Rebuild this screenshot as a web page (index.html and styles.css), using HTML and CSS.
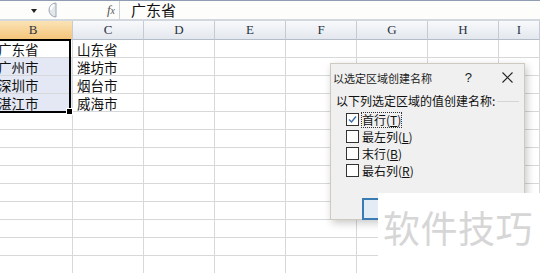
FILE: index.html
```html
<!DOCTYPE html>
<html lang="zh-CN">
<head>
    <meta charset="UTF-8">
    <title>以选定区域创建名称</title>
    <link rel="stylesheet" href="styles.css">
</head>
<body>

<div class="formula-bar">
    <div class="name-box"><span class="arrow"></span></div>
    <div class="tools">
        <svg class="knob" width="14" height="16" viewBox="0 0 14 16">
            <path d="M13 1 A7 7 0 0 0 13 15 Z" fill="#e3e7ec" stroke="#9aa6b4"/>
            <path d="M11 3 A5 5 0 0 0 8 8" fill="none" stroke="#fff" stroke-width="2"/>
        </svg>
        <span class="fx">f<span>x</span></span>
    </div>
    <div class="formula">广东省</div>
</div>

<div class="sheet">
    <div class="row head">
        <div class="sel">B</div><div>C</div><div>D</div><div>E</div><div>F</div><div>G</div><div>H</div><div>I</div>
    </div>
    <div class="row"><div>广东省</div><div>山东省</div><div></div><div></div><div></div><div></div><div></div><div></div></div>
    <div class="row"><div class="picked">广州市</div><div>潍坊市</div><div></div><div></div><div></div><div></div><div></div><div></div></div>
    <div class="row"><div class="picked">深圳市</div><div>烟台市</div><div></div><div></div><div></div><div></div><div></div><div></div></div>
    <div class="row"><div class="picked">湛江市</div><div>威海市</div><div></div><div></div><div></div><div></div><div></div><div></div></div>
    <div class="row"><div></div><div></div><div></div><div></div><div></div><div></div><div></div><div></div></div>
    <div class="row"><div></div><div></div><div></div><div></div><div></div><div></div><div></div><div></div></div>
    <div class="row"><div></div><div></div><div></div><div></div><div></div><div></div><div></div><div></div></div>
    <div class="row"><div></div><div></div><div></div><div></div><div></div><div></div><div></div><div></div></div>
    <div class="row"><div></div><div></div><div></div><div></div><div></div><div></div><div></div><div></div></div>
    <div class="row"><div></div><div></div><div></div><div></div><div></div><div></div><div></div><div></div></div>
    <div class="row"><div></div><div></div><div></div><div></div><div></div><div></div><div></div><div></div></div>
    <div class="row"><div></div><div></div><div></div><div></div><div></div><div></div><div></div><div></div></div>
    <div class="row"><div></div><div></div><div></div><div></div><div></div><div></div><div></div><div></div></div>

    <div class="selection"></div>
</div>

<div class="dialog">
    <div class="title-bar">
        <span class="title">以选定区域创建名称</span>
        <span class="help">?</span>
        <svg class="close" width="11" height="11" viewBox="0 0 11 11">
            <path d="M0.5 0.5 L10.5 10.5 M10.5 0.5 L0.5 10.5" stroke="#222" stroke-width="1.1"/>
        </svg>
    </div>
    <div class="dialog-body">
        <div class="group-label"><span>以下列选定区域的值创建名称:</span><span class="line"></span></div>
        <div class="options">
            <label class="option">
                <span class="box">
                    <svg width="11" height="11" viewBox="0 0 11 11"><path d="M2 5.5 L4.5 8 L9 2.5" fill="none" stroke="#3a6ea5" stroke-width="1.4"/></svg>
                </span>
                <span class="focus">首行(<u>T</u>)</span>
            </label>
            <label class="option"><span class="box"></span><span>最左列(<u>L</u>)</span></label>
            <label class="option"><span class="box"></span><span>末行(<u>B</u>)</span></label>
            <label class="option"><span class="box"></span><span>最右列(<u>R</u>)</span></label>
        </div>
        <div class="button"></div>
    </div>
</div>

<div class="watermark">软件技巧</div>

</body>
</html>
```

FILE: styles.css
```css
body {
    margin: 0;
    width: 540px;
    height: 273px;
    overflow: hidden;
    position: relative;
    background-color: #fff;
    font-family: "Noto Sans CJK SC", sans-serif;
    color: #111;
}

/* formula bar */
.formula-bar {
    display: flex;
    align-items: center;
    height: 18px;
    border-top: 1px solid #8e9db1;
    border-bottom: 2px solid #d3d8de;
    background-color: #fdfdfc;
}
.name-box {
    width: 43px;
    height: 100%;
    position: relative;
}
.arrow {
    position: absolute;
    left: 31px;
    top: 8px;
    border-left: 3px solid transparent;
    border-right: 3px solid transparent;
    border-top: 4px solid #222;
}
.tools {
    display: flex;
    align-items: center;
    width: 76px;
    height: 100%;
    border-right: 1px solid #cdd3da;
}
.knob {
    display: block;
}
.fx {
    margin-left: auto;
    margin-right: 4px;
    font-family: "Liberation Serif", serif;
    font-style: italic;
    font-size: 13px;
    color: #555;
}
.fx span {
    font-size: 10px;
}
.formula {
    padding-left: 11px;
    font-size: 15px;
    line-height: 18px;
    color: #111;
}

/* sheet */
.sheet {
    position: relative;
    margin-left: -6px;
}
.row {
    display: grid;
    grid-template-columns: 79px repeat(6, 71px) 1fr;
    height: 18px;
}
.row > div {
    border-right: 1px solid #d6d8da;
    border-bottom: 1px solid #d6d8da;
    padding: 1px 0 0 4px;
    font-size: 13.5px;
    line-height: 16px;
    white-space: nowrap;
    overflow: hidden;
}
.row.head {
    height: 19px;
    background: linear-gradient(#f8f9fb, #e2e7ee);
}
.row.head > div {
    padding: 0;
    text-align: center;
    font-family: "Liberation Serif", serif;
    font-size: 13px;
    line-height: 18px;
    color: #2a3340;
    border-right-color: #c4cbd4;
    border-bottom-color: #b3bcc7;
}
.row.head > .sel {
    background: linear-gradient(#fbe3b6, #f4c57a);
}
.row > .picked {
    background-color: #e3e8f4;
}
.selection {
    position: absolute;
    left: 0;
    top: 18px;
    width: 77px;
    height: 74px;
    border: 2px solid #000;
    box-sizing: border-box;
}
.selection::after {
    content: "";
    position: absolute;
    right: -4px;
    bottom: -4px;
    width: 5px;
    height: 5px;
    background-color: #000;
    border: 1px solid #fff;
}

/* dialog */
.dialog {
    position: absolute;
    left: 330px;
    top: 63px;
    width: 195px;
    height: 157px;
    box-sizing: border-box;
    background-color: #f0f0f0;
    border: 1px solid #cfcac0;
    box-shadow: 2px 3px 8px rgba(0,0,0,0.22);
}
.title-bar {
    display: flex;
    align-items: center;
    height: 27px;
    padding: 0 11px 0 2px;
}
.title {
    font-size: 11px;
    color: #222;
}
.help {
    margin-left: auto;
    margin-right: 30px;
    font-family: "Liberation Sans", sans-serif;
    font-size: 13px;
    color: #222;
}
.dialog-body {
    padding: 2px 5px 0 5px;
}
.group-label {
    display: flex;
    align-items: center;
    font-size: 12px;
    line-height: 16px;
    color: #111;
}
.group-label .line {
    flex: 1;
    margin-left: 2px;
    border-top: 1px solid #d4d4d4;
}
.options {
    display: flex;
    flex-direction: column;
    padding: 2px 0 0 10px;
}
.option {
    display: flex;
    align-items: center;
    height: 17px;
    font-size: 12px;
}
.box {
    width: 11px;
    height: 11px;
    border: 1px solid #333;
    background-color: #fff;
    margin-right: 3px;
    flex-shrink: 0;
}
.box svg {
    display: block;
}
.focus {
    outline: 1px dotted #333;
    line-height: 14px;
}
.button {
    margin: 19px 0 0 26px;
    width: 80px;
    height: 18px;
    border: 2px solid #3b7bb3;
    background-color: #e3ecf5;
}

/* site watermark */
.watermark {
    position: absolute;
    left: 378px;
    top: 193px;
    right: 0;
    bottom: 0;
    padding: 16px 0 0 5px;
    background-color: #fff;
    font-size: 37px;
    line-height: 37px;
    letter-spacing: 0.5px;
    color: #d6d6d6;
}
```
